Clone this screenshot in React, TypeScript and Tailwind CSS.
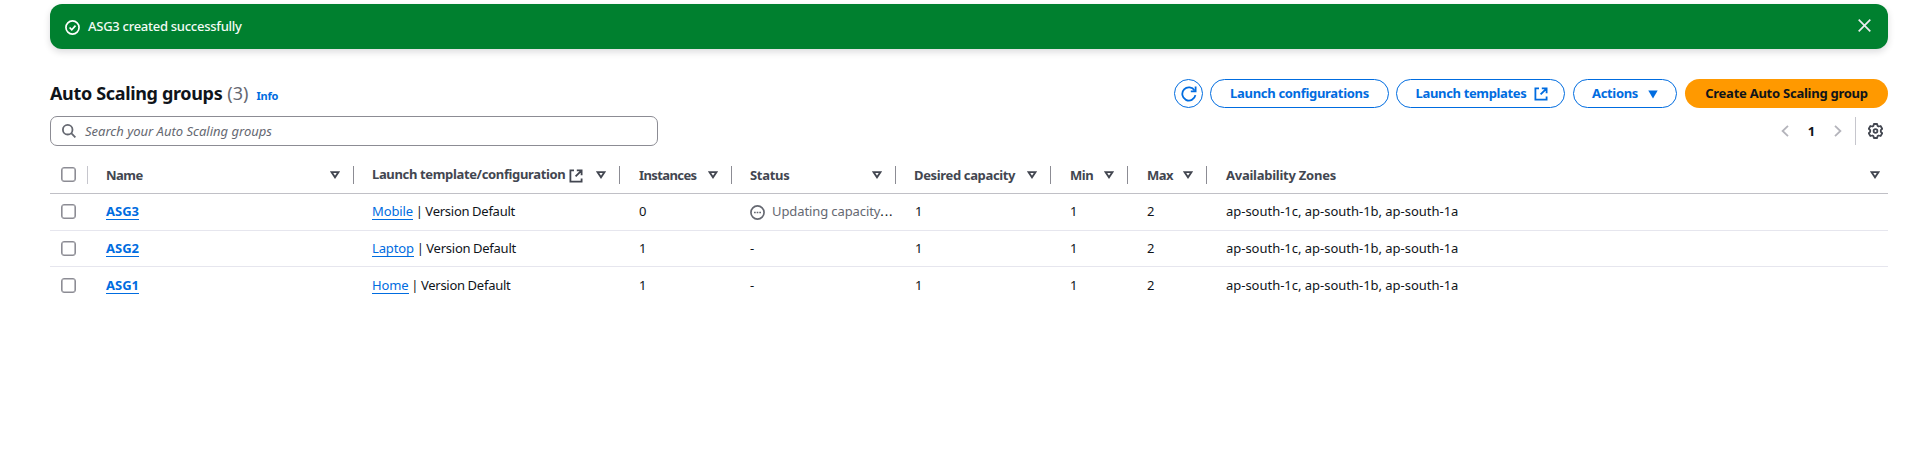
import type { ReactNode } from "react";

const columns = [
  { label: "Name", tracking: "tracking-[-0.5px]", indent: "pl-[18px]" },
  { label: "Launch template/configuration", tracking: "tracking-[-0.35px]", indent: "pl-[18px]", external: true },
  { label: "Instances", tracking: "tracking-[-0.6px]", indent: "pl-[19px]" },
  { label: "Status", tracking: "tracking-[-0.3px]", indent: "pl-[18px]" },
  { label: "Desired capacity", tracking: "tracking-[-0.35px]", indent: "pl-[18px]" },
  { label: "Min", tracking: "tracking-[-0.4px]", indent: "pl-[19px]" },
  { label: "Max", tracking: "tracking-[-0.5px]", indent: "pl-[19px]" },
  { label: "Availability Zones", tracking: "tracking-[-0.25px]", indent: "pl-[19px]", last: true },
];

const groups = [
  { name: "ASG3", template: "Mobile", instances: 0, updating: true, height: "h-[37px]" },
  { name: "ASG2", template: "Laptop", instances: 1, updating: false, height: "h-9" },
  { name: "ASG1", template: "Home", instances: 1, updating: false, height: "h-[37px]" },
];

const gridColumns = "grid grid-cols-[38px_266px_266px_112px_164px_155px_77px_79px_1fr]";

function ExternalIcon() {
  return (
    <svg width="14" height="14" viewBox="0 0 14 14" fill="none" stroke="currentColor" strokeWidth="1.8" className="shrink-0">
      <path d="M5 1.4H1.4v11.2h11.2V9.5M7.8 1.4h4.8v4.8M12.2 1.8 6.6 7.4" />
    </svg>
  );
}

function Checkbox() {
  return <span className="block size-[15px] rounded-[3px] border-[1.8px] border-[#8c8c94] bg-white shadow-[inset_0_0_0_0.6px_#8c8c94]" />;
}

function Button({ width, children }: { width: string; children: ReactNode }) {
  return (
    <button className={`flex h-[29px] items-center justify-center rounded-full border border-[#006ce0] bg-white pb-px font-bold text-[#006ce0] ${width}`}>
      {children}
    </button>
  );
}

function TextLink({ children, className }: { children: ReactNode; className: string }) {
  return <a className={`inline-block h-[17px] border-b border-[#006ce0] leading-[17px] text-[#006ce0] ${className}`}>{children}</a>;
}

function Notification() {
  return (
    <div className="flex h-[45px] items-center justify-between rounded-xl bg-[#00802f] pr-[17px] pl-[15px] text-white shadow-[0_3px_7px_rgba(0,7,22,0.14)]">
      <div className="flex items-center gap-2">
        <svg width="15" height="15" viewBox="0 0 16 16" fill="none" stroke="currentColor" strokeWidth="1.8" className="relative top-px">
          <circle cx="8" cy="8" r="7" />
          <path d="m4.9 8 2.3 2.4 4-4.4" />
        </svg>
        <span className="pb-[2px] font-medium tracking-[-0.27px] text-[#f3fbf5]">ASG3 created successfully</span>
      </div>
      <svg width="13" height="13" viewBox="0 0 13 13" fill="none" stroke="#ebebf0" strokeWidth="1.7" className="relative -top-px">
        <path d="m0.7 0.7 11.6 11.6M12.3 0.7 0.7 12.3" />
      </svg>
    </div>
  );
}

function Toolbar() {
  return (
    <div className="mt-[30px] flex h-[29px] items-center justify-between">
      <div className="flex items-baseline pb-[2px]">
        <h1 className="text-[18px] leading-6 font-bold tracking-[-0.34px]">Auto Scaling groups</h1>
        <span className="ml-[5px] text-[18px] leading-6 text-[#656871]">(3)</span>
        <a className="ml-2 text-[11px] font-bold tracking-[-0.25px] text-[#006ce0]">Info</a>
      </div>
      <div className="flex">
        <Button width="w-[29px]">
          <svg width="16" height="16" viewBox="0 0 16 16" fill="none" stroke="currentColor" strokeWidth="1.8" className="relative top-px shrink-0">
            <path d="M14.4 9.2A6.6 6.6 0 1 1 13.6 4.6" />
            <path d="M14.6 0.6v4.7H9.8" />
          </svg>
        </Button>
        <div className="ml-[7px] flex gap-[7px]">
          <Button width="w-[179px]"><span className="tracking-[-0.31px]">Launch configurations</span></Button>
          <Button width="w-[169px] pl-[3px]">
            <span className="mr-2 tracking-[-0.35px]">Launch templates</span>
            <span className="relative top-px"><ExternalIcon /></span>
          </Button>
        </div>
        <div className="ml-2 flex gap-2">
          <Button width="w-[104px]">
            <span className="mr-[10px] tracking-[-0.33px]">Actions</span>
            <svg width="10" height="9" viewBox="0 0 10 9" fill="currentColor" className="relative top-px"><path d="M0.3 0.5h9.4L5 8.5Z" /></svg>
          </Button>
          <button className="flex h-[29px] w-[203px] items-center justify-center rounded-full bg-[#ff9900] pb-px font-bold tracking-[-0.25px] text-[#0f141a]">
            Create Auto Scaling group
          </button>
        </div>
      </div>
    </div>
  );
}

function Chevron({ d }: { d: string }) {
  return (
    <svg width="8" height="12" viewBox="0 0 8 12" fill="none" stroke="#b4b4bb" strokeWidth="1.8"><path d={d} /></svg>
  );
}

function Filters() {
  return (
    <div className="mt-2 flex h-[30px] items-center justify-between">
      <div className="flex h-[30px] w-[608px] items-center rounded-[7px] border border-[#8c8c94] pl-[11px]">
        <svg width="14" height="14" viewBox="0 0 14 14" fill="none" stroke="#656871" strokeWidth="1.8">
          <circle cx="5.7" cy="5.7" r="4.8" />
          <path d="m9.2 9.2 4.2 4.2" />
        </svg>
        <span className="ml-[9px] pb-px text-[#656871] italic">Search your Auto Scaling groups</span>
      </div>
      <div className="flex items-center pr-[5px]">
        <Chevron d="M7 0.8 1.6 6 7 11.2" />
        <span className="w-[45px] text-center font-bold text-[#0f141a]">1</span>
        <Chevron d="M1 0.8 6.4 6 1 11.2" />
        <span className="ml-[13px] h-7 w-px bg-[#c6c6cd]" />
        <svg width="15" height="16" viewBox="0 0 15 16" fill="none" stroke="#424650" strokeWidth="1.8" strokeLinejoin="round" className="ml-3">
          <path d="M5.9 1h3.2l0.5 1.9 1.1 0.6 1.9-0.5 1.6 2.8-1.4 1.4v1.6l1.4 1.4-1.6 2.8-1.9-0.5-1.1 0.6L9.1 15H5.9l-0.5-1.9-1.1-0.6-1.9 0.5-1.6-2.8 1.4-1.4V7.2L0.8 5.8 2.4 3l1.9 0.5 1.1-0.6Z" />
          <circle cx="7.5" cy="8" r="1.9" />
        </svg>
      </div>
    </div>
  );
}

function TableHead() {
  return (
    <div className={`${gridColumns} mt-[11px] h-[37px] border-b border-[#c0c0c6] text-[#424650]`}>
      <div className="flex h-[35px] items-center justify-between pl-[11px]">
        <Checkbox />
        <span className="h-[18px] w-px bg-[#c6c6cd]" />
      </div>
      {columns.map((c) => (
        <div key={c.label} className={`flex h-[35px] items-center ${c.indent}`}>
          <span className={`font-bold whitespace-nowrap ${c.tracking} ${c.external ? "pb-[2px]" : ""}`}>{c.label}</span>
          {c.external && <span className="relative top-px ml-1"><ExternalIcon /></span>}
          <svg width="10" height="8" viewBox="0 0 10 8" fill="none" stroke="currentColor" strokeWidth="1.8" className={`ml-auto shrink-0 ${c.last ? "mr-2" : "mr-[13px]"}`}>
            <path d="M1.5 1.1h7L5 6.3Z" />
          </svg>
          {!c.last && <span className="h-[18px] w-px bg-[#8c8c94]" />}
        </div>
      ))}
    </div>
  );
}

export default function App() {
  return (
    <div className="h-[449px] overflow-hidden bg-white pt-1 pr-[21px] pl-[50px] font-['Noto_Sans',sans-serif] text-[13px] leading-[18px] text-[#0f141a]">
      <Notification />
      <Toolbar />
      <Filters />
      <TableHead />
      {groups.map((g, i) => (
        <div key={g.name} className={`${gridColumns} ${g.height} ${i < 2 ? "border-b border-[#e6e6ee]" : ""} items-center *:pb-[2px]`}>
          <div className="pb-px! pl-[11px]"><Checkbox /></div>
          <div className="pl-[18px]"><TextLink className="font-bold">{g.name}</TextLink></div>
          <div className="pl-[18px] whitespace-nowrap">
            <TextLink className="tracking-[-0.12px]">{g.template}</TextLink>
            <span className="tracking-[-0.25px] [word-spacing:-0.4px]"> | Version Default</span>
          </div>
          <div className="pl-[19px]">{g.instances}</div>
          {g.updating ? (
            <div className="flex items-center pl-[18px] text-[#656871]">
              <svg width="15" height="15" viewBox="0 0 16 16" fill="none" stroke="currentColor" strokeWidth="1.8" className="relative top-px shrink-0">
                <circle cx="8" cy="8" r="7" />
                <path d="M4.3 8h1.8M7.1 8h1.8M9.9 8h1.8" />
              </svg>
              <span className="ml-[7px] whitespace-nowrap tracking-[-0.1px]">
                Updating capacity<span className="tracking-[0.9px] text-[#0f141a]">...</span>
              </span>
            </div>
          ) : (
            <div className="pl-[18px]">-</div>
          )}
          <div className="pl-[19px]">1</div>
          <div className="pl-[19px]">1</div>
          <div className="pl-[19px]">2</div>
          <div className="pl-[19px] whitespace-nowrap tracking-[-0.02px]">ap-south-1c, ap-south-1b, ap-south-1a</div>
        </div>
      ))}
    </div>
  );
}
